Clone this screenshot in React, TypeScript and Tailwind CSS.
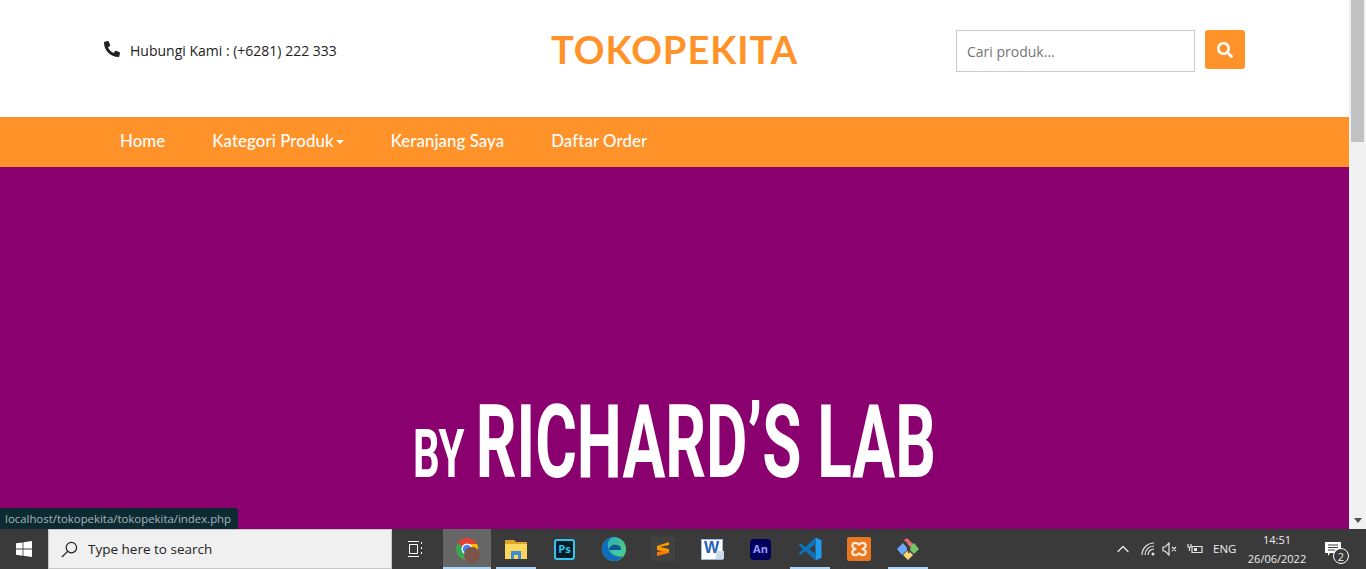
import { FaPhone, FaSearch } from "react-icons/fa"
import { ChevronUp } from "lucide-react"

const navItems = ["Home", "Kategori Produk", "Keranjang Saya", "Daftar Order"]

function ChromeIcon() {
  return (
    <div className="relative w-6 h-6">
      <svg viewBox="0 0 24 24" className="w-6 h-6">
        <circle cx="12" cy="12" r="11" fill="#e53f33" />
        <path d="M12 12 L2.5 6.5 A11 11 0 0 0 12 23 Z" fill="#34a853" />
        <path d="M12 12 L12 23 A11 11 0 0 0 22 7 L12 7 Z" fill="#fbbc05" />
        <circle cx="12" cy="12" r="5.5" fill="#fff" />
        <circle cx="12" cy="12" r="4.2" fill="#4285f4" />
      </svg>
      <div className="absolute left-[9px] top-[10px] w-4 h-4 rounded-full bg-[#7a5548]" />
    </div>
  )
}

function FolderIcon() {
  return (
    <svg viewBox="0 0 22 20" className="w-[22px] h-5">
      <path d="M0 1h9l2 2h11v17H0z" fill="#e0a526" />
      <path d="M0 5h22v15H0z" fill="#fbd75b" />
      <path d="M6 12h10v8h-3v-4H9v4H6z" fill="#3d8ddb" />
    </svg>
  )
}

function PsIcon() {
  return (
    <div className="w-[21px] h-[21px] rounded-[3px] bg-[#001d26] border-2 border-[#31c5f0] flex items-center justify-center text-[#31c5f0] text-[11px] font-bold font-['Open_Sans',sans-serif]">
      Ps
    </div>
  )
}

function EdgeIcon() {
  return (
    <svg viewBox="0 0 24 24" className="w-6 h-6">
      <defs>
        <linearGradient id="edge-a" x1="0" y1="0" x2="1" y2="1">
          <stop offset="0%" stopColor="#22a6d8" />
          <stop offset="100%" stopColor="#5fd65a" />
        </linearGradient>
      </defs>
      <circle cx="12" cy="12" r="12" fill="url(#edge-a)" />
      <path d="M0 12C1 4 7 0 12 0c-5 1-7 5-6 10 1 7 8 11 15 9-3 4-6 5-9 5C5 24 0 19 0 12z" fill="#0f6cbd" />
      <path d="M7 13c0-4 4-6 8-5 3 .6 4.5 2.5 4 5H7z" fill="#11558f" />
      <path d="M11 13h13c-.5 2-3 4-7 4-3 0-6-1.500-6-4z" fill="#3cc8b8" />
    </svg>
  )
}

function SublimeIcon() {
  return (
    <div className="w-6 h-6 rounded-[2px] bg-[#414141] flex items-center justify-center">
      <svg viewBox="0 0 14 16" className="w-[14px] h-4">
        <path d="M13 1 1 5v4l12 3V8L4 6l9-2z" fill="#ff9800" />
        <path d="M1 8l12 3v1L1 15v-4l6-1z" fill="#f57c00" />
      </svg>
    </div>
  )
}

function WordIcon() {
  return (
    <div className="relative w-[22px] h-[21px] bg-white border border-[#9cb8e0] flex items-start justify-center">
      <span className="text-[#1e5fb8] text-[16px] leading-[16px] font-bold font-['Liberation_Sans',sans-serif]">W</span>
      <div className="absolute right-[-2px] bottom-0 w-2 h-2 bg-[#cdd9ea]" />
    </div>
  )
}

function AnIcon() {
  return (
    <div className="w-[21px] h-[21px] rounded-[4px] bg-[#00005b] flex items-center justify-center text-[#9999ff] text-[11px] font-bold font-['Open_Sans',sans-serif]">
      An
    </div>
  )
}

function VscodeIcon() {
  return (
    <svg viewBox="0 0 24 24" className="w-6 h-6">
      <path d="M17.500 0.500 23.500 3.300v17.400l-6 2.800z" fill="#1f9cf0" />
      <path d="M17.500 0.500 7.500 10 2.500 6.200.5 7.500 5 12 .5 16.500l2 1.300 5-3.800 10 9.500V17l-6.500-5 6.500-5z" fill="#0b74bd" />
    </svg>
  )
}

function XamppIcon() {
  return (
    <div className="w-6 h-6 rounded-[2px] bg-[#e8771f] flex items-center justify-center">
      <svg viewBox="0 0 16 16" className="w-[18px] h-[18px]" fill="none" stroke="#ffe9d6" strokeWidth="2">
        <path d="M5 2.500c1.500 0 2 1 3 1.500 1-.5 1.500-1.500 3-1.500 2 0 3 1.300 3 2.800 0 1.500-1.500 2-2.500 2.700 1 .7 2.500 1.200 2.500 2.700 0 1.500-1 2.800-3 2.800-1.500 0-2-1-3-1.500-1 .5-1.500 1.500-3 1.500-2 0-3-1.300-3-2.800C2 9.200 3.500 8.700 4.500 8 3.500 7.300 2 6.800 2 5.300 2 3.800 3 2.500 5 2.500z" />
      </svg>
    </div>
  )
}

function GitIcon() {
  return (
    <svg viewBox="0 0 24 24" className="w-6 h-6">
      <path d="M9 2l3-2 6 6-3 3z" fill="#e56b6f" transform="translate(-1 1)" />
      <path d="M1 12l6-6 5 6-6 6z" fill="#6ea8fe" />
      <path d="M15 8l3-2 5 6-5 5-4-4z" fill="#7ac36a" />
      <path d="M7 18l5-5 5 5-5 5z" fill="#f7d774" />
      <path d="M10 5l3 11" stroke="#3a3a3a" strokeWidth="1.500" />
    </svg>
  )
}

const taskbarApps = [
  { key: "chrome", icon: <ChromeIcon />, active: true, open: true },
  { key: "folder", icon: <FolderIcon />, open: true },
  { key: "ps", icon: <PsIcon /> },
  { key: "edge", icon: <EdgeIcon /> },
  { key: "sublime", icon: <SublimeIcon /> },
  { key: "word", icon: <WordIcon /> },
  { key: "an", icon: <AnIcon /> },
  { key: "vscode", icon: <VscodeIcon />, open: true },
  { key: "xampp", icon: <XamppIcon /> },
  { key: "git", icon: <GitIcon />, open: true },
]

export default function App() {
  return (
    <div className="relative w-[1366px] h-[569px] overflow-hidden flex flex-col bg-white">
      <div className="flex h-[529px]">
        {/* Page */}
        <div className="w-[1349px] flex flex-col">
          <header className="h-[117px] bg-white flex items-start font-['Open_Sans',sans-serif]">
            <div className="w-[452px] pl-[104px] pt-[40px] flex items-start">
              <FaPhone className="w-4 h-4 mt-[1px] text-[#222] -scale-x-100" />
              <span className="ml-[10px] text-[14px] leading-[22px] text-[#222]">Hubungi Kami : (+6281) 222 333</span>
            </div>
            <div className="w-[445px] text-center pt-[25px] text-[38px] leading-[48px] tracking-[1px] font-bold text-[#ff9228] font-['Lato',sans-serif]">
              TOKOPEKITA
            </div>
            <div className="ml-[59px] pt-[30px] flex items-start gap-[10px]">
              <input
                placeholder="Cari produk..."
                className="w-[239px] h-[42px] border border-[#ccc] px-[10px] text-[14px] bg-white outline-none placeholder:text-[#757575]"
              />
              <button className="w-10 h-[39px] rounded-[3px] bg-[#ff9228] flex items-center justify-center text-white">
                <FaSearch className="w-4 h-4" />
              </button>
            </div>
          </header>

          <nav className="h-[50px] bg-[#ff9228] flex items-center pl-[120px] pb-[2px] gap-[47px] text-white text-[16.8px] tracking-[0.1px] font-medium font-['Lato',sans-serif]">
            {navItems.map((item) => (
              <div key={item} className="flex items-center">
                {item}
                {item === "Kategori Produk" && (
                  <span className="ml-[2px] mt-[2px] border-x-[4px] border-x-transparent border-t-[4px] border-t-white" />
                )}
              </div>
            ))}
          </nav>

          {/* Hero banner */}
          <section className="flex-1 bg-[#8b006f] flex flex-col items-center pt-[225px]">
            <div className="flex items-baseline text-white font-bold font-['Roboto',sans-serif] whitespace-nowrap scale-x-[0.625]">
              <span className="text-[67px] leading-[100px] mr-[18px]">BY</span>
              <span className="text-[102px] leading-[100px]">RICHARD’S LAB</span>
            </div>
          </section>
        </div>

        {/* Scrollbar */}
        <div className="w-[17px] bg-[#f1f1f1] flex flex-col justify-between items-center">
          <div className="w-[13px] h-[142px] bg-[#c1c1c1]" />
          <div className="h-[17px] flex items-center justify-center">
            <span className="border-x-[4px] border-x-transparent border-t-[5px] border-t-[#505050]" />
          </div>
        </div>
      </div>

      {/* Taskbar */}
      <div className="h-10 bg-[#3a3a3a] flex items-stretch text-white font-['Open_Sans',sans-serif]">
        <div className="w-12 flex items-center justify-center">
          <svg viewBox="0 0 16 16" className="w-4 h-4" fill="#fff">
            <path d="M0 2.300 6.600 1.400v6.200H0zM7.400 1.300 16 0v7.600H7.400zM0 8.400h6.600v6.300L0 13.700zM7.400 8.400H16V16l-8.600-1.200z" />
          </svg>
        </div>
        <div className="w-[344px] bg-[#f0f0f0] border border-[#c8c8c8] flex items-center pl-[12px] text-[#222]">
          <svg viewBox="0 0 18 18" className="w-[17px] h-[17px]" fill="none" stroke="#222" strokeWidth="1.300">
            <circle cx="11" cy="7" r="5.500" />
            <path d="M7 11 1 17" />
          </svg>
          <span className="ml-[10px] text-[13.5px] font-['Open_Sans',sans-serif]">Type here to search</span>
        </div>
        <div className="w-[51px] pr-[4px] flex items-center justify-center">
          <svg viewBox="0 0 15 16" className="w-[15px] h-4" fill="none" stroke="#fff" strokeWidth="1">
            <path d="M0 .5h11M1.500 3.500h8v9h-8zM0 15.500h11M13.500 1v2M13.500 6v2M13.500 11v2" />
          </svg>
        </div>
        <div className="flex">
          {taskbarApps.map((app) => (
            <div
              key={app.key}
              className={`relative flex items-center justify-center ${app.active ? "w-[48px] bg-[#666666]" : "w-[49px]"}`}
            >
              {app.icon}
              {app.open && (
                <div className={`absolute bottom-0 h-[2px] bg-[#a8d4f7] ${app.active ? "left-0 right-0" : "left-[5px] right-[4px]"}`} />
              )}
            </div>
          ))}
        </div>

        {/* Tray */}
        <div className="ml-auto flex items-center text-[#eee]">
          <ChevronUp className="w-5 h-5 mr-[8px]" strokeWidth={1.5} />
          <svg viewBox="0 0 14 14" className="w-[14px] h-[14px] mr-[7px]" fill="none" stroke="#e4e4e4" strokeWidth="1.200">
            <path d="M1 13a12 12 0 0 1 12-12M4 13a9 9 0 0 1 9-9M7 13a6 6 0 0 1 6-6" />
            <circle cx="12" cy="12" r="1.500" fill="#e4e4e4" stroke="none" />
          </svg>
          <svg viewBox="0 0 16 14" className="w-4 h-[14px] mr-[9px]" fill="none" stroke="#e4e4e4" strokeWidth="1.200">
            <path d="M1 5h2l4-4v12l-4-4H1zM10 5l4 4M14 5l-4 4" />
          </svg>
          <svg viewBox="0 0 16 12" className="w-4 h-3 mr-[10px]" fill="none" stroke="#e4e4e4" strokeWidth="1.200">
            <path d="M5 3.500h10v6H5z" />
            <path d="M7 5h3v3H7z" fill="#e4e4e4" stroke="none" />
            <path d="M1 1v3h3V1M2.500 4v4" />
          </svg>
          <span className="text-[11.5px] w-[24px] mr-[10px]">ENG</span>
          <div className="w-[60px] mr-[18px] text-center text-[11px] leading-[19px]">
            <div>14:51</div>
            <div className="whitespace-nowrap">26/06/2022</div>
          </div>
          <div className="relative w-[41px] h-full flex items-center">
            <svg viewBox="0 0 16 14" className="w-4 h-[14px]" fill="#fff">
              <path d="M0 0h16v11H5l-2 3v-3H0z" />
              <path d="M3 3h10M3 5.500h10M3 8h7" stroke="#3a3a3a" strokeWidth="1" />
            </svg>
            <div className="absolute left-[8px] top-[19px] w-4 h-4 rounded-full bg-[#3a3a3a] border border-white flex items-center justify-center text-[11px] leading-none">
              2
            </div>
          </div>
        </div>
      </div>

      {/* Link status bubble */}
      <div className="absolute left-0 top-[508px] h-[21px] w-[238px] pl-[5px] bg-[#0d2a33] rounded-tr-[3px] text-[#a6b6ba] text-[11.4px] leading-[21px] whitespace-nowrap font-['Open_Sans',sans-serif]">
        localhost/tokopekita/tokopekita/index.php
      </div>
    </div>
  )
}
